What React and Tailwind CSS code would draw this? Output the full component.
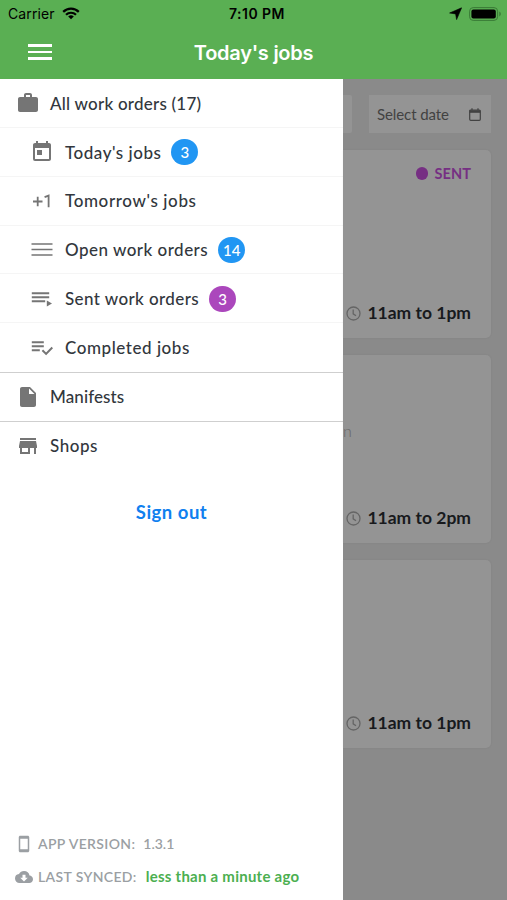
import {
  MdWork,
  MdToday,
  MdInsertDriveFile,
  MdStore,
  MdStayCurrentPortrait,
  MdCloudDownload
} from "react-icons/md";

function PlusOneIcon() {
  return (
    <svg className="h-[16px] w-[22px]" viewBox="0 0 22 16" fill="none" stroke="#757575" strokeWidth="1.8">
      <path d="M2 8.5h9.5M6.7 3.8v9.4M13.6 4.2l4-1.6V14.2" />
    </svg>
  );
}

function LinesIcon() {
  return (
    <svg className="h-[15px] w-[22px]" viewBox="0 0 22 15" fill="none" stroke="#757575" strokeWidth="1.7">
      <path d="M.5 2h21M.5 7.5h21M.5 13h21" />
    </svg>
  );
}

function SentIcon() {
  return (
    <svg className="h-[16px] w-[22px]" viewBox="0 0 22 16" fill="none" stroke="#757575" strokeWidth="1.9">
      <path d="M.8 2.2h17.4M.8 6.2h17.4M.8 10.2h13.4" />
      <path d="M15.8 9.4v6l5.2-3z" fill="#757575" stroke="none" />
    </svg>
  );
}

function CompletedIcon() {
  return (
    <svg className="h-[16px] w-[22px]" viewBox="0 0 22 16" fill="none" stroke="#757575" strokeWidth="1.9">
      <path d="M.8 2.2h12M.8 6.2h12M.8 10.2h8" />
      <path d="M11.4 10.2l3.7 3.7 6.2-6.4" strokeWidth="2" />
    </svg>
  );
}

function ClockIcon() {
  return (
    <svg className="size-[15px]" viewBox="0 0 15 15" fill="none" stroke="#656565" strokeWidth="1.3">
      <circle cx="7.5" cy="7.5" r="6.5" />
      <path d="M7.2 3.5v4.3l2.8 2" />
    </svg>
  );
}

function WifiIcon() {
  return (
    <svg className="h-[13px] w-[18px]" viewBox="0 0 18 13" fill="none" stroke="#000" strokeWidth="2.2">
      <path d="M1.2 4.9a11 11 0 0 1 15.6 0M4 7.8a7.1 7.1 0 0 1 10 0" />
      <path d="M9 12.3 6.2 9.6a4 4 0 0 1 5.6 0z" fill="#000" stroke="none" />
    </svg>
  );
}

const subItems = [
  { label: "Today's jobs", icon: <MdToday className="size-6" />, count: 3, badge: "bg-[#2196f3]", tracking: "tracking-[0.53px]" },
  { label: "Tomorrow's jobs", icon: <PlusOneIcon />, tracking: "tracking-[0.62px]" },
  { label: "Open work orders", icon: <LinesIcon />, count: 14, badge: "bg-[#2196f3]", tracking: "tracking-[0.48px]" },
  { label: "Sent work orders", icon: <SentIcon />, count: 3, badge: "bg-[#ab47bc]", tracking: "tracking-[0.4px]" },
  { label: "Completed jobs", icon: <CompletedIcon />, tracking: "tracking-[0.55px]" }
];

const jobs = [
  { time: "11am to 1pm", sent: true },
  { time: "11am to 2pm", note: "n" },
  { time: "11am to 1pm" }
];

function StatusBar() {
  return (
    <div className="grid h-[27px] grid-cols-3 items-center pl-[8px] pr-[5px] font-['Inter'] text-black">
      <div className="flex items-center gap-[7px] text-[14px]">
        <span className="tracking-[0.1px]">Carrier</span>
        <WifiIcon />
      </div>
      <div className="pl-[4px] text-center text-[14px] font-semibold tracking-[0.45px] whitespace-nowrap">
        7:10 PM
      </div>
      <div className="flex items-center justify-end gap-[7px]">
        <svg className="size-[13px]" viewBox="0 0 13 13">
          <path d="M12.6.8 7.6 12.6 6.6 6.9.6 6z" stroke="#000" strokeWidth=".6" />
        </svg>
        <svg className="h-[14px] w-[33px]" viewBox="0 0 33 14">
          <rect x=".6" y=".6" width="28" height="12.8" rx="3.6" fill="none" stroke="#3a7a36" strokeWidth="1" />
          <rect x="2.4" y="2.4" width="24.4" height="9.2" rx="2" />
          <path d="M30.3 4.6c2 .8 2 4 0 4.8z" fill="#3a7a36" />
        </svg>
      </div>
    </div>
  );
}

function Header() {
  return (
    <header className="h-[79px] shrink-0 bg-[#5aaf53]">
      <StatusBar />
      <div className="grid h-[50px] grid-cols-[1fr_auto_1fr] items-center">
        <button type="button" aria-label="Menu" className="ml-[28px] flex w-[24px] flex-col gap-[4px]">
          <span className="h-[2.5px] bg-white" />
          <span className="h-[2.5px] bg-white" />
          <span className="h-[2.5px] bg-white" />
        </button>
        <h1 className="pt-px font-['Inter'] text-[20px] font-semibold tracking-[-0.25px] text-white">Today's jobs</h1>
      </div>
    </header>
  );
}

function Drawer() {
  return (
    <nav className="flex w-[343px] shrink-0 flex-col bg-white text-[17px] font-medium text-[#32373d]">
      <div className="flex h-[48.85px] items-center border-b border-[#f5f5f5] pt-px pl-[16px]">
        <MdWork className="size-6 text-[#757575]" />
        <span className="ml-[10px] tracking-[0.23px]">All work orders (17)</span>
      </div>

      {subItems.map((item) => (
        <div
          key={item.label}
          className="flex h-[48.85px] items-center border-b border-[#f5f5f5] pt-px pl-[30px] nth-6:border-transparent"
        >
          <span className="flex w-[24px] justify-center text-[#757575]">{item.icon}</span>
          <span className={`ml-[11px] ${item.tracking}`}>{item.label}</span>
          {item.count && (
            <span
              className={`ml-[10px] flex h-[26px] w-[27px] items-center justify-center rounded-full text-[15px] text-white ${item.badge}`}
            >
              {item.count}
            </span>
          )}
        </div>
      ))}

      <div className="flex h-[49.85px] items-center border-y border-[#cfcfcf] pl-[16px]">
        <MdInsertDriveFile className="size-6 text-[#757575]" />
        <span className="ml-[10px] tracking-[0.1px]">Manifests</span>
      </div>
      <div className="flex h-[47.85px] items-center pl-[16px]">
        <MdStore className="size-6 text-[#757575]" />
        <span className="ml-[10px] tracking-[0.55px]">Shops</span>
      </div>

      <button type="button" className="mt-[29px] text-center text-[18.5px] font-bold tracking-[0.5px] text-[#1080ef]">
        Sign out
      </button>

      <div className="mt-auto pb-[7px] pl-[15px] text-[14px] font-semibold text-[#9b9fa3]">
        <div className="flex h-[33px] items-center">
          <MdStayCurrentPortrait className="size-[18px]" />
          <span className="ml-[5px] tracking-[0.35px]">APP VERSION:</span>
          <span className="ml-[8px]">1.3.1</span>
        </div>
        <div className="flex h-[33px] items-center">
          <MdCloudDownload className="size-[18px]" />
          <span className="ml-[5px] tracking-[0.35px]">LAST SYNCED:</span>
          <span className="ml-[9px] text-[15px] font-bold tracking-[0.25px] text-[#4caf50]">
            less than a minute ago
          </span>
        </div>
      </div>
    </nav>
  );
}

function JobCard({ job }) {
  return (
    <article className="flex h-[188px] flex-col justify-between rounded-r-[5px] bg-[#949494] pr-[20px] pt-[12px] pb-[13px] shadow-[0_0_2px_rgba(0,0,0,0.08)]">
      <div className="flex h-[23px] items-center justify-end">
        {job.sent && (
          <>
            <span className="size-[12.5px] rounded-full bg-[#762f83]" />
            <span className="ml-[6px] text-[14.5px] font-bold tracking-[0.1px] text-[#762f83]">SENT</span>
          </>
        )}
      </div>
      {job.note && <div className="mb-[35px] text-[16px] font-light text-[#656565]">{job.note}</div>}
      <div className="flex h-[24px] items-center justify-end">
        <ClockIcon />
        <span className="ml-[6px] text-[17.5px] font-bold text-[#181a1d]">{job.time}</span>
      </div>
    </article>
  );
}

function JobList() {
  return (
    <main className="min-w-0 flex-1 bg-[#8a8a8a] pr-[16px] pt-[16px]">
      <div className="flex h-[38px] justify-between">
        <div className="w-[9px] rounded-r-[2px] bg-[#949494]" />
        <div className="flex w-[122px] items-center justify-between bg-[#949494] pl-[8px] pr-[10px] text-[#424242]">
          <span className="text-[15px] tracking-[-0.1px]">Select date</span>
          <svg className="h-[13px] w-[12px]" viewBox="0 0 12 13" fill="none" stroke="#424242" strokeWidth="1.2">
            <rect x=".7" y="2" width="10.6" height="10.3" rx="1" />
            <path d="M.7 3.5h10.6" strokeWidth="2.6" />
            <path d="M3 .3v2M9 .3v2" />
          </svg>
        </div>
      </div>
      <div className="mt-[17px] flex flex-col gap-[17px]">
        {jobs.map((job, index) => (
          <JobCard key={index} job={job} />
        ))}
      </div>
    </main>
  );
}

export default function App() {
  return (
    <div className="flex h-[900px] w-[507px] flex-col overflow-hidden font-['Lato',sans-serif]">
      <Header />
      <div className="flex min-h-0 flex-1">
        <Drawer />
        <JobList />
      </div>
    </div>
  );
}
